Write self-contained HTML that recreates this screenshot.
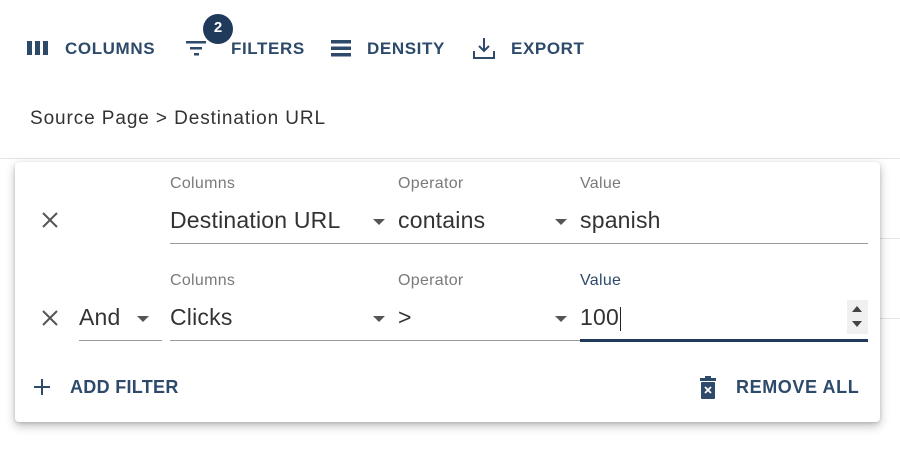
<!DOCTYPE html>
<html><head><style>
*{margin:0;padding:0;box-sizing:border-box}
body{width:900px;height:451px;background:#fff;position:relative;overflow:hidden;font-family:"Liberation Sans",sans-serif}
.a{position:absolute;white-space:nowrap}
.tb{color:#2d4a6b;font-size:17px;font-weight:bold;top:39px;letter-spacing:0.6px}
.lbl{font-size:16px;color:#7a7a7a;letter-spacing:0.3px}
.val{font-size:23px;color:#333;letter-spacing:0.2px}
.arr{width:0;height:0;border-left:6px solid transparent;border-right:6px solid transparent;border-top:6px solid #555}
.ln{height:1px;background:#9a9a9a}
</style></head><body>
<svg class="a" style="left:27px;top:40px" width="22" height="16"><rect x="0" y="1" width="5" height="14" fill="#2d4a6b"/><rect x="8" y="1" width="5" height="14" fill="#2d4a6b"/><rect x="16" y="1" width="5" height="14" fill="#2d4a6b"/></svg>
<div class="a tb" style="left:65px">COLUMNS</div>
<svg class="a" style="left:186px;top:38px" width="22" height="22"><rect x="0" y="3" width="20" height="2.5" fill="#2d4a6b"/><rect x="4" y="9" width="12" height="2.5" fill="#2d4a6b"/><rect x="8" y="15" width="5" height="2.5" fill="#2d4a6b"/></svg>
<div class="a" style="left:203px;top:14px;width:30px;height:30px;border-radius:50%;background:#1f3a5a;color:#fff;font-weight:bold;font-size:15px;text-align:center;line-height:28px">2</div>
<div class="a tb" style="left:231px">FILTERS</div>
<svg class="a" style="left:331px;top:40px" width="20" height="17"><rect x="0" y="0" width="20" height="3.5" fill="#2d4a6b"/><rect x="0" y="6.5" width="20" height="3.5" fill="#2d4a6b"/><rect x="0" y="13" width="20" height="3.5" fill="#2d4a6b"/></svg>
<div class="a tb" style="left:367px">DENSITY</div>
<svg class="a" style="left:472px;top:36px" width="24" height="24" fill="none" stroke="#2d4a6b" stroke-width="2"><path d="M12 2v13M7 10l5 5 5-5M2 15v7h20v-7"/></svg>
<div class="a tb" style="left:511px">EXPORT</div>
<div class="a" style="left:30px;top:108px;font-size:19px;color:#333;letter-spacing:0.9px">Source Page &gt; Destination URL</div>
<div class="a" style="left:0;top:158px;width:900px;height:1px;background:#e4e4e4"></div>
<div class="a" style="left:880px;top:238px;width:20px;height:1px;background:#e4e4e4"></div>
<div class="a" style="left:880px;top:318px;width:20px;height:1px;background:#e4e4e4"></div>
<div class="a" style="left:15px;top:162px;width:865px;height:260px;background:#fff;border-radius:4px;box-shadow:0 4px 10px rgba(0,0,0,0.25),0 1px 3px rgba(0,0,0,0.15)"></div>
<div class="a lbl" style="left:170px;top:175px">Columns</div>
<div class="a lbl" style="left:398px;top:175px">Operator</div>
<div class="a lbl" style="left:580px;top:175px">Value</div>
<svg class="a" style="left:41px;top:211px" width="18" height="18" stroke="#555" stroke-width="2"><path d="M2 2L16 16M16 2L2 16"/></svg>
<div class="a val" style="left:170px;top:207px">Destination URL</div>
<div class="a arr" style="left:373px;top:219px"></div>
<div class="a val" style="left:398px;top:207px">contains</div>
<div class="a arr" style="left:555px;top:219px"></div>
<div class="a val" style="left:580px;top:207px">spanish</div>
<div class="a ln" style="left:170px;top:243px;width:698px"></div>
<div class="a lbl" style="left:170px;top:272px">Columns</div>
<div class="a lbl" style="left:398px;top:272px">Operator</div>
<div class="a lbl" style="left:580px;top:272px;color:#2d4a6b">Value</div>
<svg class="a" style="left:41px;top:309px" width="18" height="18" stroke="#555" stroke-width="2"><path d="M2 2L16 16M16 2L2 16"/></svg>
<div class="a val" style="left:79px;top:304px">And</div>
<div class="a arr" style="left:137px;top:316px"></div>
<div class="a ln" style="left:79px;top:340px;width:83px"></div>
<div class="a val" style="left:170px;top:304px">Clicks</div>
<div class="a arr" style="left:373px;top:316px"></div>
<div class="a val" style="left:398px;top:304px">&gt;</div>
<div class="a arr" style="left:555px;top:316px"></div>
<div class="a val" style="left:580px;top:304px">100</div>
<div class="a" style="left:620px;top:307px;width:1px;height:24px;background:#222"></div>
<div class="a" style="left:847px;top:300px;width:21px;height:34px;background:#f0f0f0"></div>
<div class="a" style="left:852px;top:306px;width:0;height:0;border-left:5px solid transparent;border-right:5px solid transparent;border-bottom:6px solid #444"></div>
<div class="a" style="left:852px;top:321px;width:0;height:0;border-left:5px solid transparent;border-right:5px solid transparent;border-top:6px solid #444"></div>
<div class="a ln" style="left:170px;top:340px;width:410px"></div>
<div class="a" style="left:580px;top:339px;width:288px;height:2.5px;background:#1f3a5a"></div>
<svg class="a" style="left:33px;top:378px" width="18" height="18" stroke="#2d4a6b" stroke-width="2"><path d="M9 1v16M1 9h16"/></svg>
<div class="a" style="left:70px;top:377px;font-size:18px;font-weight:bold;color:#2d4a6b;letter-spacing:0.3px">ADD FILTER</div>
<svg class="a" style="left:699px;top:376px" width="18" height="24"><rect x="1" y="2" width="16" height="3" fill="#2d4a6b"/><rect x="6" y="0" width="6" height="3" fill="#2d4a6b"/><rect x="2" y="6" width="14" height="17" rx="1" fill="#2d4a6b"/><path d="M6 11l6 6M12 11l-6 6" stroke="#fff" stroke-width="1.8"/></svg>
<div class="a" style="left:736px;top:377px;font-size:18px;font-weight:bold;color:#2d4a6b;letter-spacing:0.6px">REMOVE ALL</div>
</body></html>
